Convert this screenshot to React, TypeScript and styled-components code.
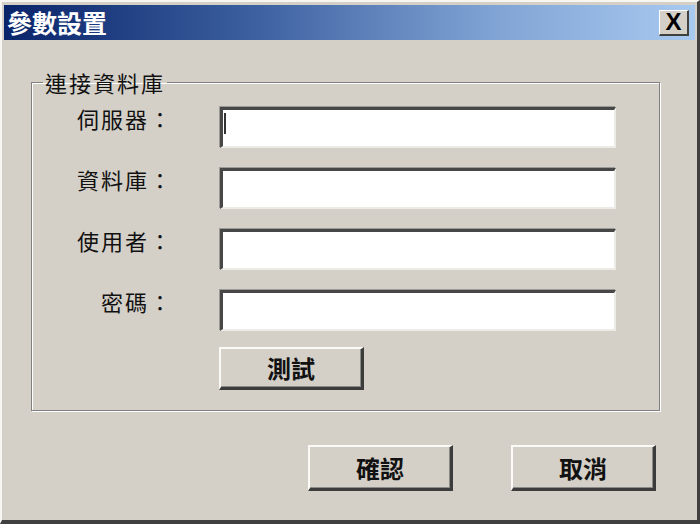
import styled, { createGlobalStyle } from 'styled-components';

const GlobalStyle = createGlobalStyle`
  html, body {
    margin: 0;
    padding: 0;
    background: #d4d0c8;
  }
  * {
    box-sizing: border-box;
  }
`;

const font = `"Noto Sans CJK TC", "Noto Sans", sans-serif`;

const Window = styled.div`
  width: 700px;
  height: 524px;
  display: flex;
  flex-direction: column;
  background: #d4d0c8;
  border-style: solid;
  border-width: 2px 3px 4px 2px;
  border-color: #f7f6f1 #404040 #404040 #f7f6f1;
  padding: 3px 2px 0 2px;
  font-family: ${font};
  color: #111;
`;

const TitleBar = styled.div`
  height: 35px;
  flex: none;
  display: flex;
  align-items: center;
  justify-content: space-between;
  padding: 0 6px 0 3px;
  background: linear-gradient(90deg, #0a246a 0%, #3a5e9e 35%, #7fa2d4 70%, #a8caf0 100%);
`;

const Title = styled.span`
  color: #fff;
  font-size: 25px;
  font-weight: 700;
  letter-spacing: 0px;
  line-height: 1;
`;

const CloseButton = styled.button`
  width: 30px;
  height: 26px;
  padding: 0;
  display: flex;
  align-items: center;
  justify-content: center;
  background: #d4d0c8;
  border-style: solid;
  border-width: 1px 2px 2px 1px;
  border-color: #fff #404040 #404040 #fff;
  font-family: "Liberation Sans", Arial, sans-serif;
  font-size: 24px;
  font-weight: 700;
  color: #000;
  line-height: 1;
`;

const Body = styled.div`
  flex: 1;
  display: flex;
  flex-direction: column;
  padding: 29px 35px 0 27px;
`;

const Group = styled.fieldset`
  margin: 0;
  padding: 12px 0 20px 0;
  min-width: 0;
  border: 1px solid #808080;
  box-shadow: inset 1px 1px 0 #fff, 1px 1px 0 #fff;
  display: flex;
  flex-direction: column;
  gap: 20px;
`;

const Legend = styled.legend`
  margin-left: 11px;
  padding: 0 2px;
  font-size: 22px;
  letter-spacing: 2px;
  line-height: 26px;
`;

const Row = styled.div`
  display: flex;
  align-items: flex-start;
  gap: 47px;
`;

const Label = styled.span`
  width: 141px;
  text-align: right;
  font-size: 22px;
  letter-spacing: 2px;
  line-height: 22px;
`;

const Field = styled.div`
  width: 396px;
  height: 41px;
  background: #fff;
  border-style: solid;
  border-width: 3px 2px 2px 3px;
  border-color: #474747 #ecebe6 #ecebe6 #474747;
  box-shadow: -1px -1px 0 #9a9a96;
  padding: 3px 0 0 1px;
`;

const Caret = styled.span`
  display: block;
  width: 2px;
  height: 21px;
  background: #333;
`;

const ButtonRow = styled.div<{ $end?: boolean }>`
  display: flex;
  justify-content: ${({ $end }) => ($end ? 'flex-end' : 'flex-start')};
  gap: 58px;
  padding-left: ${({ $end }) => ($end ? '0' : '187px')};
  padding-right: ${({ $end }) => ($end ? '4px' : '0')};
  margin-top: ${({ $end }) => ($end ? '34px' : '-4px')};
`;

const Button = styled.button<{ $tall?: boolean }>`
  width: 145px;
  height: ${({ $tall }) => ($tall ? '46px' : '43px')};
  padding: 0;
  background: #d4d0c8;
  border-style: solid;
  border-width: 2px 3px 3px 2px;
  border-color: #fbfaf6 #3c3c3c #3c3c3c #fbfaf6;
  box-shadow: inset -1px -1px 0 #8a8a86;
  font-family: ${font};
  font-size: 24px;
  font-weight: 700;
  color: #111;
  line-height: 1;
`;

const fields = [
  { label: '伺服器：', focused: true },
  { label: '資料庫：' },
  { label: '使用者：' },
  { label: '密碼：' },
];

export default function App() {
  return (
    <>
      <GlobalStyle />
      <Window>
        <TitleBar>
          <Title>參數設置</Title>
          <CloseButton>X</CloseButton>
        </TitleBar>
        <Body>
          <Group>
            <Legend>連接資料庫</Legend>
            {fields.map((f) => (
              <Row key={f.label}>
                <Label>{f.label}</Label>
                <Field>{f.focused && <Caret />}</Field>
              </Row>
            ))}
            <ButtonRow>
              <Button>測試</Button>
            </ButtonRow>
          </Group>
          <ButtonRow $end>
            <Button $tall>確認</Button>
            <Button $tall>取消</Button>
          </ButtonRow>
        </Body>
      </Window>
    </>
  );
}
